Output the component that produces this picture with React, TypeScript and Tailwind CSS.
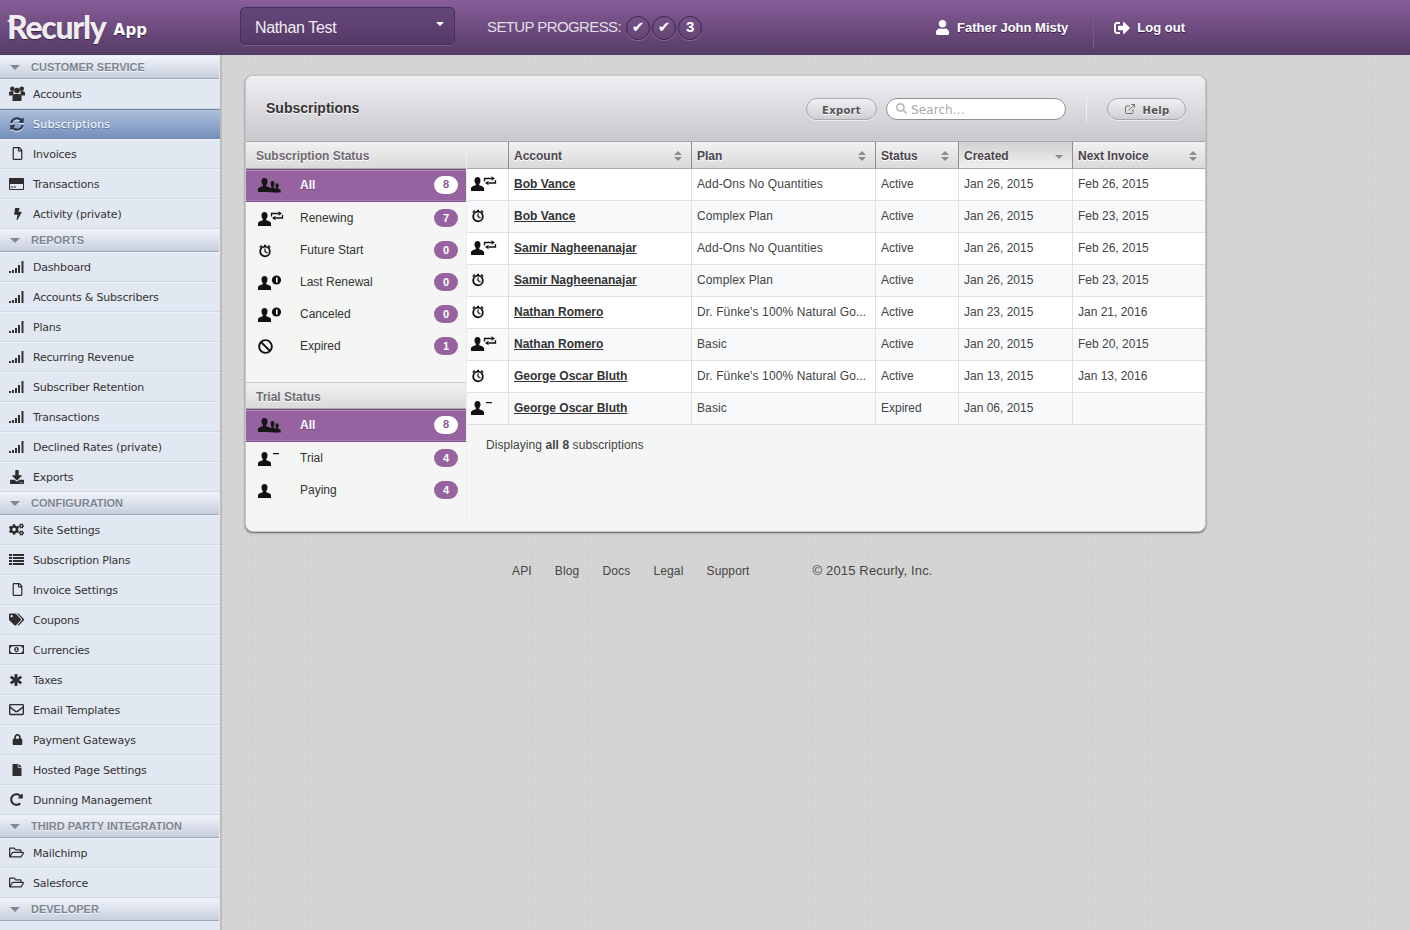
import type { ReactNode } from "react";
import {
	FaRegFile, FaBolt, FaDownload, FaCogs, FaTags,
	FaRegMoneyBillAlt, FaAsterisk, FaRegEnvelope, FaLock, FaFile, FaRedoAlt, FaRegFolderOpen,
	FaUser, FaSignOutAlt, FaSearch, FaBan, FaSyncAlt,
} from "react-icons/fa";
import { ExternalLink } from "lucide-react";

const personPath = "M6.500 2c2 0 3 1.500 3 3.400 0 1.500-.6 2.800-1.300 3.500v1.100c0 .6 4.800 1.200 4.800 3.200V16H0v-2.800c0-2 4.800-2.600 4.800-3.200V8.900C4.100 8.200 3.500 6.900 3.500 5.400 3.500 3.500 4.500 2 6.500 2z";

function Bars() {
	return (
		<svg width="15" height="12" viewBox="0 0 15 12" fill="#333">
			<rect x="0" y="10" width="2" height="2" />
			<rect x="3" y="9" width="2" height="3" />
			<rect x="6" y="7" width="2" height="5" />
			<rect x="9" y="4" width="2" height="8" />
			<rect x="12.500" y="0" width="2" height="12" />
		</svg>
	);
}

function UsersIcon() {
	return (
		<svg width="16" height="15" viewBox="0 0 16 15" fill="#2d2d2d">
			<circle cx="3.300" cy="2.800" r="2.300" />
			<circle cx="12.700" cy="2.800" r="2.300" />
			<path d="M0 9V7c0-1 1-1.800 2-1.800h2.500V9.500H0zM16 9V7c0-1-1-1.800-2-1.800h-2.500V9.500H16z" />
			<circle cx="8" cy="4.500" r="2.800" />
			<path d="M3.500 15v-4.500C3.500 8.800 4.800 8 6 8h4c1.200 0 2.500.8 2.500 2.500V15z" />
		</svg>
	);
}

function CardIcon() {
	return (
		<svg width="15" height="12" viewBox="0 0 15 12" fill="#2d2d2d">
			<path d="M1 0h13a1 1 0 011 1v10a1 1 0 01-1 1H1a1 1 0 01-1-1V1a1 1 0 011-1zm0 6v5h13V6H1z" fillRule="evenodd" />
			<rect x="1.500" y="8.500" width="3" height="1" />
			<rect x="5" y="8.500" width="2" height="1" />
		</svg>
	);
}

function ListIcon() {
	return (
		<svg width="15" height="11" viewBox="0 0 15 11" fill="#2d2d2d">
			{[0, 3, 6, 9].map((y) => (
				<g key={y}>
					<rect x="0" y={y} width="3" height="2" />
					<rect x="3.800" y={y} width="11.200" height="2" />
				</g>
			))}
		</svg>
	);
}

function StatusIcon({ kind, color = "#111" }: { kind: string; color?: string }) {
	return (
		<svg width="26" height="17" viewBox="0 0 26 17" fill={color} stroke="none">
			{kind === "all" && (
				<g>
					<path d={personPath} />
					<path d={personPath} transform="translate(10.500 3.500) scale(.62 .8)" />
					<path d={personPath} transform="translate(15.500 6) scale(.55 .65)" />
				</g>
			)}
			{(kind === "renew" || kind === "one" || kind === "minus" || kind === "paying") && <path d={personPath} />}
			{kind === "renew" && (
				<g>
					<path d="M13.500 6.500V3.500H20.500" fill="none" stroke={color} strokeWidth="1.300" />
					<path d="M20.500 1.300L24 3.500L20.500 5.700z" />
					<path d="M24.500 5V8H17.500" fill="none" stroke={color} strokeWidth="1.300" />
					<path d="M17.500 5.800L14 8L17.500 10.200z" />
				</g>
			)}
			{kind === "one" && (
				<g>
					<circle cx="18.500" cy="6" r="4.600" />
					<path d="M18.800 3.500v5" stroke="#fff" strokeWidth="1.600" />
				</g>
			)}
			{kind === "minus" && <rect x="15" y="3" width="6" height="1.200" />}
			{kind === "clock" && (
				<g fill="none" stroke={color}>
					<circle cx="7" cy="9.500" r="4.800" strokeWidth="1.800" />
					<path d="M7 6.500v3.200l2.500 1.200" strokeWidth="1.200" />
					<path d="M6 3.500h2M1.800 5.500l2-2M12.200 5.500l-2-2" strokeWidth="1.500" />
				</g>
			)}
		</svg>
	);
}

function Sort({ active }: { active?: boolean }) {
	return (
		<span className="absolute right-[9px] top-[9px] flex flex-col gap-[2px]">
			{!active && <span className="w-0 h-0 border-x-[4px] border-x-transparent border-b-[4px] border-b-[#8d8d8d]" />}
			<span className={`w-0 h-0 border-x-[4px] border-x-transparent border-t-[4px] border-t-[#8d8d8d] ${active ? "mt-[4px]" : ""}`} />
		</span>
	);
}

type NavItem = { label: string; icon: ReactNode; active?: boolean };
const sz = 15;
const nav: { title: string; items: NavItem[] }[] = [
	{
		title: "Customer Service",
		items: [
			{ label: "Accounts", icon: <UsersIcon /> },
			{ label: "Subscriptions", icon: <FaSyncAlt size={14} className="ml-px drop-shadow-[0_1px_0_#e8eef8]" />, active: true },
			{ label: "Invoices", icon: <FaRegFile size={13} className="ml-[2px]" /> },
			{ label: "Transactions", icon: <CardIcon /> },
			{ label: "Activity (private)", icon: <FaBolt size={12} className="ml-[3px]" /> },
		],
	},
	{
		title: "Reports",
		items: [
			{ label: "Dashboard", icon: <Bars /> },
			{ label: "Accounts & Subscribers", icon: <Bars /> },
			{ label: "Plans", icon: <Bars /> },
			{ label: "Recurring Revenue", icon: <Bars /> },
			{ label: "Subscriber Retention", icon: <Bars /> },
			{ label: "Transactions", icon: <Bars /> },
			{ label: "Declined Rates (private)", icon: <Bars /> },
			{ label: "Exports", icon: <FaDownload size={14} className="ml-px" /> },
		],
	},
	{
		title: "Configuration",
		items: [
			{ label: "Site Settings", icon: <FaCogs size={15} /> },
			{ label: "Subscription Plans", icon: <ListIcon /> },
			{ label: "Invoice Settings", icon: <FaRegFile size={13} className="ml-[2px]" /> },
			{ label: "Coupons", icon: <FaTags size={sz} /> },
			{ label: "Currencies", icon: <FaRegMoneyBillAlt size={sz} /> },
			{ label: "Taxes", icon: <FaAsterisk size={12} stroke="currentColor" strokeWidth={40} className="ml-px" /> },
			{ label: "Email Templates", icon: <FaRegEnvelope size={sz} /> },
			{ label: "Payment Gateways", icon: <FaLock size={11} className="ml-[3px]" /> },
			{ label: "Hosted Page Settings", icon: <FaFile size={12} className="ml-[2px]" /> },
			{ label: "Dunning Management", icon: <FaRedoAlt size={13} className="ml-px" /> },
		],
	},
	{
		title: "Third Party Integration",
		items: [
			{ label: "Mailchimp", icon: <FaRegFolderOpen size={sz} /> },
			{ label: "Salesforce", icon: <FaRegFolderOpen size={sz} /> },
		],
	},
	{ title: "Developer", items: [] },
];

const subStatus = [
	{ kind: "all", label: "All", count: 8, active: true },
	{ kind: "renew", label: "Renewing", count: 7 },
	{ kind: "clock", label: "Future Start", count: 0 },
	{ kind: "one", label: "Last Renewal", count: 0 },
	{ kind: "one", label: "Canceled", count: 0 },
	{ kind: "ban", label: "Expired", count: 1 },
];
const trialStatus = [
	{ kind: "all", label: "All", count: 8, active: true },
	{ kind: "minus", label: "Trial", count: 4 },
	{ kind: "paying", label: "Paying", count: 4 },
];

const long = "Dr. Fünke's 100% Natural Go...";
const rows = [
	["renew", "Bob Vance", "Add-Ons No Quantities", "Active", "Jan 26, 2015", "Feb 26, 2015"],
	["clock", "Bob Vance", "Complex Plan", "Active", "Jan 26, 2015", "Feb 23, 2015"],
	["renew", "Samir Nagheenanajar", "Add-Ons No Quantities", "Active", "Jan 26, 2015", "Feb 26, 2015"],
	["clock", "Samir Nagheenanajar", "Complex Plan", "Active", "Jan 26, 2015", "Feb 23, 2015"],
	["clock", "Nathan Romero", long, "Active", "Jan 23, 2015", "Jan 21, 2016"],
	["renew", "Nathan Romero", "Basic", "Active", "Jan 20, 2015", "Feb 20, 2015"],
	["clock", "George Oscar Bluth", long, "Active", "Jan 13, 2015", "Jan 13, 2016"],
	["minus", "George Oscar Bluth", "Basic", "Expired", "Jan 06, 2015", ""],
];

const cols = "grid grid-cols-[42px_183px_184px_83px_114px_133px]";

function StatusRow({ kind, label, count, active }: { kind: string; label: string; count: number; active?: boolean }) {
	return (
		<div
			className={`flex items-center pl-[12px] pr-[8px] ${
				active
					? "h-[33px] pb-[2px] bg-[#96629f] border-y border-[#7f4f8b] shadow-[inset_0_1px_0_#b48dbb,inset_0_-1px_0_#a87fb0] text-white font-bold [text-shadow:0_1px_0_#6b4477]"
					: "h-[32px] text-[#333]"
			}`}
		>
			<span className="w-[42px] flex shrink-0">
				{kind === "ban" ? <FaBan size={15} color="#111" /> : <StatusIcon kind={kind} color={active ? "#161616" : "#111"} />}
			</span>
			<span className="flex-1">{label}</span>
			<span
				className={`w-[24px] h-[18px] rounded-full flex items-center justify-center text-[11px] font-bold [text-shadow:none] ${
					active ? "bg-white text-[#8a5a96]" : "bg-[#96629f] text-white"
				}`}
			>
				{count}
			</span>
		</div>
	);
}

function PillButton({ children, className }: { children: ReactNode; className: string }) {
	return (
		<button
			className={`h-[22px] pt-[3px] rounded-full border border-[#a9a9ad] bg-gradient-to-b from-[#f1f0f3] to-[#d0cfd3] flex items-center justify-center gap-[7px] text-[10px] tracking-[0.3px] font-bold text-[#555] shadow-[0_1px_0_#eee] [text-shadow:0_1px_0_#fff] font-['DejaVu_Sans',sans-serif] ${className}`}
		>
			{children}
		</button>
	);
}

export default function App() {
	return (
		<div className="w-[1410px] h-[930px] overflow-hidden bg-[#d4d4d4] bg-[radial-gradient(#cdcdcd_0.7px,transparent_1px),radial-gradient(#dbdbdb_0.7px,transparent_1px)] bg-[length:5px_3px,7px_5px] font-['Liberation_Sans',sans-serif] text-[12px]">
			<header className="h-[55px] flex items-center bg-gradient-to-b from-[#875d99] to-[#553b66] text-white">
				<div className="relative w-[240px] shrink-0 flex items-baseline pl-[7px] mb-[2px] [text-shadow:0_1px_1px_#3b2547]">
					<span className="absolute left-[7px] top-[11px] w-0 h-0 border-y-[3px] border-y-transparent border-r-[5px] border-r-[#f0edf1]" />
					<span className="font-['Lato',sans-serif] font-black text-[32px] leading-[40px] tracking-[-1.3px] text-[#f0edf1]">Recurly</span>
					<span className="ml-[8px] -translate-y-[4px] font-['DejaVu_Sans',sans-serif] font-bold text-[15px] tracking-[0.2px]">App</span>
				</div>
				<div className="w-[215px] h-[38px] mb-[3px] rounded-[5px] border border-[#46305a] bg-gradient-to-b from-[#66467a] to-[#553a68] flex items-center justify-between pl-[14px] pr-[10px] text-[16px] tracking-[-0.35px] text-[#f0edf2] shadow-[0_1px_0_#7d5d8e]">
					<span className="pt-[3px]">Nathan Test</span>
					<span className="w-0 h-0 mb-[4px] border-x-[4px] border-x-transparent border-t-[4px] border-t-white" />
				</div>
				<div className="ml-[32px] flex items-center gap-[2px] text-[15px] text-[#e4dfe8] tracking-[-0.6px]">
					<span className="mr-[3px]">SETUP PROGRESS:</span>
					{[0, 1, 2].map((i) => (
						<span key={i} className="w-[24px] h-[24px] tracking-normal rounded-full border border-[#3b2748] flex items-center justify-center text-[15px] font-bold text-white shadow-[0_1px_0_#8a6a99]">
							{i < 2 ? <span className="font-['DejaVu_Sans',sans-serif] font-normal text-[15px]">✔</span> : "3"}
						</span>
					))}
				</div>
				<div className="ml-[233px] flex items-center gap-[7px] text-[13px] font-bold [text-shadow:0_1px_0_#3b2547]">
					<FaUser size={15} />
					Father John Misty
				</div>
				<div className="ml-[25px] w-px h-[42px] bg-[#4c3359] border-r border-[#7b5a8b]" />
				<div className="ml-[20px] flex items-center gap-[7px] text-[13px] font-bold [text-shadow:0_1px_0_#3b2547]">
					<FaSignOutAlt size={16} />
					Log out
				</div>
			</header>

			<div className="flex h-[875px]">
				<nav className="w-[222px] shrink-0 pt-px bg-[#e2e8f1] border-r-2 border-[#bcbcbc] font-['DejaVu_Sans',sans-serif] overflow-hidden">
					{nav.map((group) => (
						<div key={group.title}>
							<div className="h-[23px] w-[219px] flex items-center pl-[10px] bg-gradient-to-b from-[#f0f4fa] to-[#c8cfdd] border-b border-[#9ea8b8] font-['Liberation_Sans',sans-serif] font-bold text-[11px] uppercase text-[#7c8591] [text-shadow:0_1px_0_#f4f6f9]">
								<span className="mr-[11px] w-0 h-0 border-x-[5px] border-x-transparent border-t-[5px] border-t-[#808894]" />
								{group.title}
							</div>
							{group.items.map((item) => (
								<div
									key={item.label}
									className={`h-[30px] flex items-center text-[11px] ${
										item.active
											? "tracking-[0.25px] bg-gradient-to-b from-[#aebfd9] to-[#7590bd] border-y border-[#7189b2] text-white [text-shadow:0_1px_0_#5a7099]"
											: "tracking-[-0.2px] bg-[#e2e8f1] border-b border-[#cfd8e5] shadow-[inset_0_1px_0_#eef2f7] text-[#333]"
									}`}
								>
									<span className={`w-[33px] pl-[9px] flex shrink-0 ${item.active ? "text-[#2c3850]" : "text-[#2d2d2d]"}`}>{item.icon}</span>
									<span className="pt-[3px]">{item.label}</span>
								</div>
							))}
						</div>
					))}
				</nav>

				<main className="flex-1 pl-[23px] pt-[20px]">
					<section className="w-[961px] h-[457px] rounded-[8px] border border-[#c4c4c4] bg-[#f4f6f3] shadow-[0_1px_2px_#0000008c] overflow-hidden">
						<div className="h-[66px] flex items-center pl-[20px] bg-gradient-to-b from-[#f0eef3] to-[#c9c8cd] border-b border-[#a8a8a8]">
							<h1 className="flex-1 text-[14px] font-bold text-[#333] [text-shadow:0_1px_0_#fff]">Subscriptions</h1>
							<PillButton className="w-[71px]">Export</PillButton>
							<div className="ml-[9px] w-[180px] h-[22px] pt-[2px] rounded-full border border-[#8f8f92] bg-white flex items-center pl-[9px] gap-[4px] font-['DejaVu_Sans',sans-serif] text-[12px] tracking-[0.1px] text-[#aaa]">
								<FaSearch size={11} color="#bbb" className="-mt-[2px]" />
								Search...
							</div>
							<div className="ml-[20px] w-px h-[28px] bg-[#a9a9ad] border-r border-[#eee]" />
							<PillButton className="ml-[20px] w-[79px] mr-[19px]">
								<ExternalLink size={12} strokeWidth={1.800} color="#666" className="-mt-[3px]" />
								Help
							</PillButton>
						</div>

						<div className="flex">
							<div className="w-[221px] h-[383px] shrink-0 border-r border-[#eceeeb] text-[12px]">
								<div className="h-[27px] pt-[2px] flex items-center pl-[10px] bg-gradient-to-b from-[#f1f1f1] to-[#dadada] border-b border-[#aaa] font-bold text-[#6e6a70] [text-shadow:0_1px_0_#fff]">
									Subscription Status
								</div>
								{subStatus.map((s) => <StatusRow key={s.label} {...s} />)}
								<div className="mt-[20px] h-[27px] pt-[2px] flex items-center pl-[10px] bg-gradient-to-b from-[#f1f1f1] to-[#dadada] border-y border-[#c9c9c9] border-b-[#aaa] font-bold text-[#6e6a70] [text-shadow:0_1px_0_#fff]">
									Trial Status
								</div>
								{trialStatus.map((s) => <StatusRow key={s.label} {...s} />)}
							</div>

							<div className="w-[739px]">
								<div className={`${cols} h-[27px] border-b border-[#a8a8a8] font-bold text-[#4a444d] [text-shadow:0_1px_0_#fff]`}>
									{["", "Account", "Plan", "Status", "Created", "Next Invoice"].map((h, i) => (
										<div
											key={i}
											className={`relative flex items-center pl-[5px] pt-[2px] border-r border-[#8f8f8f] last:border-r-0 ${
												h === "Created" ? "bg-gradient-to-b from-[#d2d2d2] to-[#efefef]" : "bg-gradient-to-b from-[#f1f1f1] to-[#dadada]"
											}`}
										>
											{h}
											{h && <Sort active={h === "Created"} />}
										</div>
									))}
								</div>
								{rows.map((r, i) => (
									<div key={i} className={`${cols} h-[32px] border-b border-[#dfe0e4] text-[#444] ${i % 2 ? "bg-[#f8f9fb]" : "bg-white"}`}>
										{r.map((c, j) => (
											<div
												key={j}
												className={`flex items-center pb-[2px] pr-[4px] border-r border-[#dfe0e4] last:border-r-0 whitespace-nowrap overflow-hidden ${
													j === 0 ? "pl-[4px]" : "pl-[5px]"
												} ${j === 2 ? "tracking-[0.12px]" : ""}`}
											>
												{j === 0 ? <StatusIcon kind={c} /> : j === 1 ? <a className="font-bold underline text-[#333]">{c}</a> : c}
											</div>
										))}
									</div>
								))}
								<p className="pl-[19px] pt-[11px] tracking-[0.07px] text-[#444]">
									Displaying <b>all 8</b> subscriptions
								</p>
							</div>
						</div>
					</section>

					<footer className="mt-[31px] pl-[267px] flex items-center text-[12px] tracking-[0.15px] text-[#444] h-[15px]">
						<a>API</a>
						<a className="ml-[23px]">Blog</a>
						<a className="ml-[23px]">Docs</a>
						<a className="ml-[23px]">Legal</a>
						<a className="ml-[23px]">Support</a>
						<span className="ml-[63px] text-[13px]">© 2015 Recurly, Inc.</span>
					</footer>
				</main>
			</div>
		</div>
	);
}
